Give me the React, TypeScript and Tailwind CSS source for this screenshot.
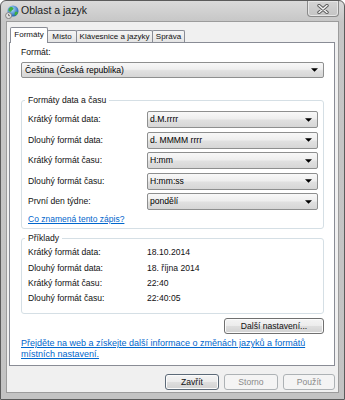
import React from "react";

const FONT = { fontFamily: '"Liberation Sans", Arial, sans-serif' };

function Triangle() {
  return (
    <svg width="7" height="4" viewBox="0 0 7 4" className="shrink-0">
      <path d="M0 0.3H7L3.5 3.8Z" fill="#000" />
    </svg>
  );
}

function Combo({ value, className }: { value: string; className?: string }) {
  return (
    <div
      className={
        "flex items-center justify-between rounded-[2px] border border-[#8e8f8f] bg-[linear-gradient(to_bottom,#f8f8f8_0%,#eeeeee_45%,#e0e0e0_55%,#d6d6d6_100%)] pr-[5px] text-[#000] " +
        (className ?? "")
      }
    >
      <span className="leading-none">{value}</span>
      <Triangle />
    </div>
  );
}

function Globe() {
  return (
    <svg width="14" height="14" viewBox="0 0 14 14">
      <defs>
        <radialGradient id="gl" cx="40%" cy="35%" r="65%">
          <stop offset="0" stopColor="#b5e3ff" />
          <stop offset="1" stopColor="#1c62b5" />
        </radialGradient>
      </defs>
      <circle cx="8" cy="6" r="5.5" fill="url(#gl)" />
      <path d="M5 2.4C6.3 1.6 8 2.2 8.6 3.6C8.2 5.2 6.8 4.9 6.3 6.3C5.8 7.4 4.3 6.7 3.4 5.5C3.5 4.2 4 3.1 5 2.4Z" fill="#3fae3f" />
      <path d="M10.2 6.8C11.2 6.4 12.6 6.9 13 7.8C12.4 9.4 11 10.6 9.7 10.4C9.6 9 9.6 7.6 10.2 6.8Z" fill="#3fae3f" />
      <circle cx="3.6" cy="10.6" r="3" fill="#e2e2e2" stroke="#6f6f6f" strokeWidth="0.8" />
      <path d="M3.6 9V10.7H5" stroke="#444" strokeWidth="0.7" fill="none" />
    </svg>
  );
}

function CloseX() {
  return (
    <svg width="12" height="10" viewBox="0 0 12 10">
      <path d="M2 1.5L10 8.5M10 1.5L2 8.5" stroke="#5a5a5a" strokeWidth="3.4" strokeLinecap="round" />
      <path d="M2 1.5L10 8.5M10 1.5L2 8.5" stroke="#f4f4f4" strokeWidth="1.6" strokeLinecap="round" />
    </svg>
  );
}

function Tab({ label, selected, w }: { label: string; selected?: boolean; w: string }) {
  if (selected) {
    return (
      <div className={`relative z-10 -mb-[1px] flex h-[16px] items-start justify-center rounded-t-[2px] border border-b-0 border-[#898c95] bg-white pt-[2px] ${w}`}>
        <span className="text-[8px] leading-[10px]">{label}</span>
      </div>
    );
  }
  return (
    <div className={`-ml-[1px] flex h-[12px] items-center justify-center rounded-t-[2px] border border-b-0 border-[#898c95] bg-[linear-gradient(to_bottom,#f5f5f5,#e4e4e4)] ${w}`}>
      <span className="text-[8px] leading-[10px]">{label}</span>
    </div>
  );
}

function GroupBox({ title, className, children }: { title: string; className: string; children: React.ReactNode }) {
  return (
    <div className={`relative rounded-[3px] border border-[#d5dfe5] ${className}`}>
      <span className="absolute -top-[6px] left-[3px] bg-white px-[3px] leading-[11px]">{title}</span>
      {children}
    </div>
  );
}

export default function App() {
  const formatRows = [
    ["Krátký formát data:", "d.M.rrrr"],
    ["Dlouhý formát data:", "d. MMMM rrrr"],
    ["Krátký formát času:", "H:mm"],
    ["Dlouhý formát času:", "H:mm:ss"],
    ["První den týdne:", "pondělí"],
  ];
  const examples = [
    ["Krátký formát data:", "18.10.2014"],
    ["Dlouhý formát data:", "18. října 2014"],
    ["Krátký formát času:", "22:40"],
    ["Dlouhý formát času:", "22:40:05"],
  ];
  return (
    <div className="h-[400px] w-[345px] bg-white text-[8.6px] text-[#111]" style={FONT}>
      <div className="flex h-full w-full flex-col rounded-t-[6px] border border-[#5b5b5b] bg-[linear-gradient(to_bottom,#dadada_0px,#c6c6c6_21px,#c3c3c3_100%)] px-[5px] pb-[6px]">
        {/* title bar */}
        <div className="flex h-[20px] items-center">
          <div className="-ml-[1px] mt-[2px]">
            <Globe />
          </div>
          <span className="ml-[2px] text-[10.5px] text-[#1b1b1b]">Oblast a jazyk</span>
          <div className="ml-auto flex h-[16px] w-[32px] items-center justify-center self-start rounded-b-[4px] border border-t-0 border-[#8a8a8a] bg-[linear-gradient(to_bottom,#d4d4d4,#c4c4c4)] shadow-[inset_0_0_0_1px_#e6e6e6]">
            <CloseX />
          </div>
        </div>

        {/* client */}
        <div className="flex flex-1 flex-col border border-[#9c9c9c] bg-[#f0f0f0] pl-[2px] pr-[3px] pt-[5px]">
          {/* tabs */}
          <div className="flex h-[15px] items-end pl-[1px]">
            <Tab label="Formáty" selected w="w-[38px]" />
            <Tab label="Místo" w="w-[30px]" />
            <Tab label="Klávesnice a jazyky" w="w-[77px]" />
            <Tab label="Správa" w="w-[33px]" />
          </div>

          {/* panel */}
          <div className="flex h-[324px] flex-col border border-[#898c95] bg-white pl-[11px] pr-[10px] pt-[4px]">
            <div className="leading-[11px]">Formát:</div>
            <Combo value="Čeština (Česká republika)" className="mt-[4px] h-[16px] pl-[3px]" />

            <GroupBox title="Formáty data a času" className="mt-[22px] flex h-[129px] flex-col pl-[6px] pr-[5px] pt-[10px]">
              <div className="flex flex-col gap-[3.5px]">
                {formatRows.map(([l, v]) => (
                  <div key={l} className="flex h-[17px] items-center">
                    <span className="w-[119px] shrink-0">{l}</span>
                    <Combo value={v} className="h-[17px] flex-1 pl-[2px]" />
                  </div>
                ))}
              </div>
              <a className="mt-[3.5px] text-[8.5px] leading-[11px] text-[#0066cc] underline">Co znamená tento zápis?</a>
            </GroupBox>

            <GroupBox title="Příklady" className="mt-[9px] flex h-[76px] flex-col pl-[6px] pt-[6px]">
              {examples.map(([l, v]) => (
                <div key={l} className="flex h-[15.33px] items-center">
                  <span className="w-[119px] shrink-0">{l}</span>
                  <span>{v}</span>
                </div>
              ))}
            </GroupBox>

            <button className="mt-[4px] flex h-[16px] w-[100px] items-center justify-center self-end rounded-[3px] border border-[#707070] bg-[linear-gradient(to_bottom,#f4f4f4_0%,#ececec_48%,#dedede_52%,#d2d2d2_100%)] shadow-[inset_0_0_0_1px_#fbfbfb]">
              Další nastavení...
            </button>

            <a className="mt-[4px] text-[9px] leading-[11px] text-[#0066cc] underline">
              Přejděte na web a získejte další informace o změnách jazyků a formátů
              <br />
              místních nastavení.
            </a>
          </div>

          {/* bottom buttons */}
          <div className="mt-[8px] flex h-[16px] justify-end gap-[5px]">
            <button className="flex w-[54px] items-center justify-center rounded-[3px] border border-[#5c6a78] bg-[linear-gradient(to_bottom,#f4f4f4_0%,#ececec_48%,#dedede_52%,#d2d2d2_100%)] shadow-[inset_0_0_0_1px_#fbfbfb]">
              Zavřít
            </button>
            <button className="flex w-[54px] items-center justify-center rounded-[3px] border border-[#adb2b5] bg-[#f4f4f4] text-[#8a8a8a]">
              Storno
            </button>
            <button className="flex w-[52px] items-center justify-center rounded-[3px] border border-[#adb2b5] bg-[#f4f4f4] text-[#8a8a8a]">
              Použít
            </button>
          </div>
        </div>
      </div>
    </div>
  );
}
